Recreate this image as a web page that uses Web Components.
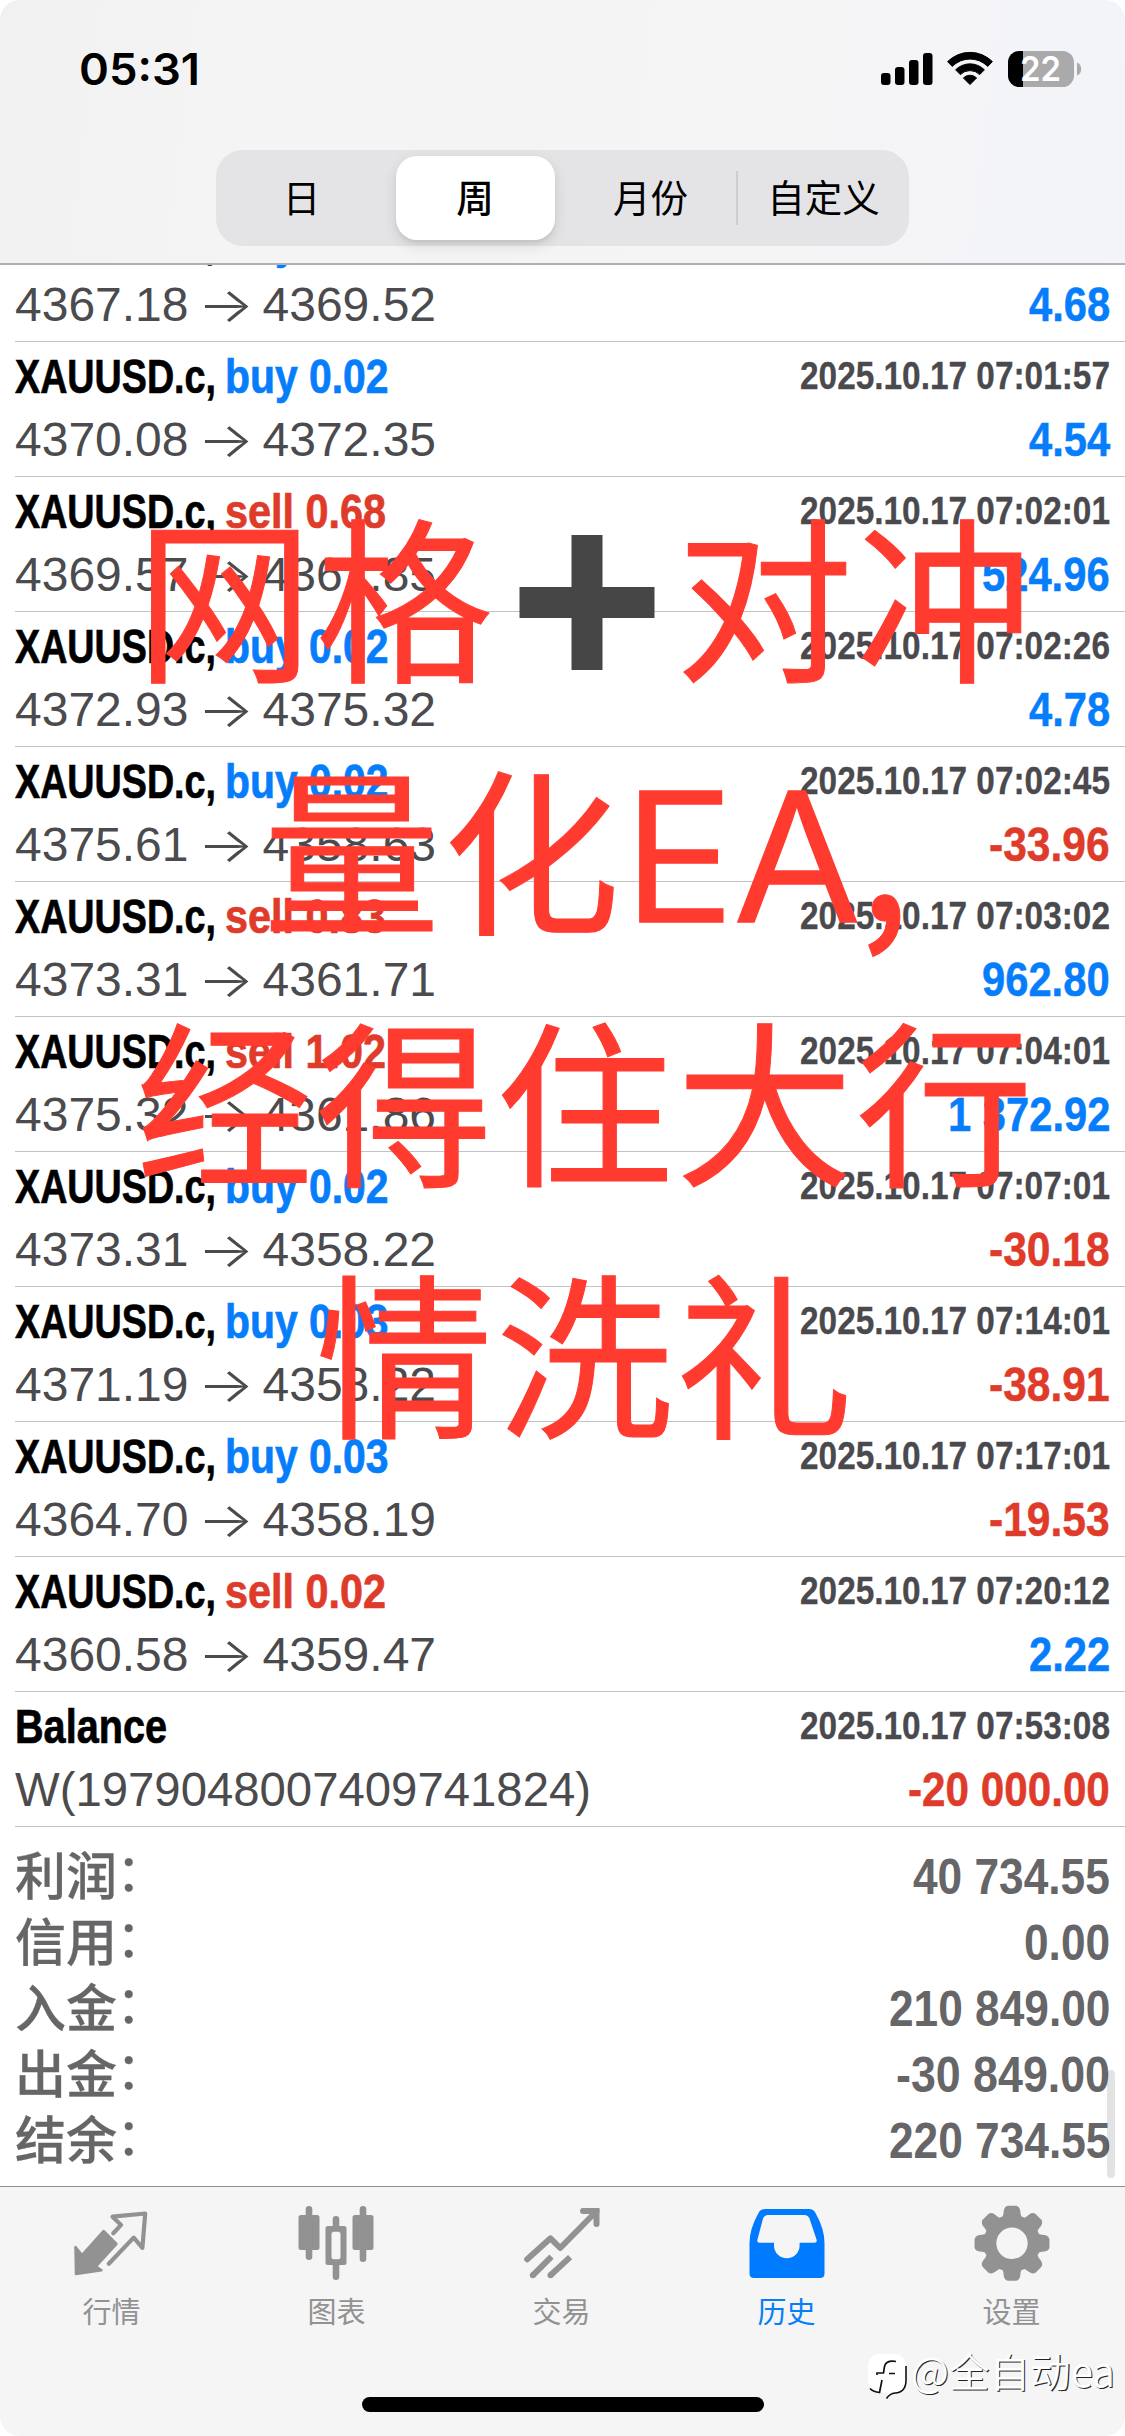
<!DOCTYPE html>
<html lang="zh-CN">
<head>
<meta charset="utf-8">
<title>历史</title>
<style>
  html, body { margin: 0; padding: 0; background: #fff; }
  body { width: 1125px; height: 2436px; overflow: hidden; font-family: "Liberation Sans", "Noto Sans CJK SC", sans-serif; }
</style>
</head>
<body>
<history-app></history-app>
<script>
const define = (name, html, setup) => {
  const tpl = document.createElement('template');
  tpl.innerHTML = html.trim();
  customElements.define(name, class extends HTMLElement {
    connectedCallback() {
      if (this.shadowRoot) return;
      const root = this.attachShadow({ mode: 'open' });
      root.appendChild(document.importNode(tpl.content, true));
      if (setup) setup(this, root);
    }
  });
};

/* Condensed text: squeezed horizontally to the advance width given in "w". */
define('fit-text', `
  <style>
    :host { display: inline-block; white-space: pre; text-align: left; }
    span { display: inline-block; transform-origin: 0 50%; }
  </style><span><slot></slot></span>`, (el, root) => {
  const s = root.querySelector('span');
  const w = +el.getAttribute('w');
  const nat = s.getBoundingClientRect().width;
  el.style.width = w + 'px';
  s.style.transform = 'scaleX(' + w / nat + ')';
  s.style.marginRight = (w - nat) + 'px';
});

/* Width of a tabular number whose digits are d px wide. */
const numWidth = (t, d) => [...t].reduce((a, c) => a + (c >= '0' && c <= '9' ? d : c === '-' ? d * .7 : d * .5), 0);

define('status-bar', `
  <style>
    :host { display: flex; justify-content: space-between; align-items: center; height: 138px; padding: 0 42px 0 79px; box-sizing: border-box; }
    .time { font: 600 43.5px/60px Inter, sans-serif; color: #000; }
    svg { display: block; }
    .b { font: 600 34px Inter, sans-serif; fill: #fff; }
  </style>
  <div class="time"><fit-text w="121">05:31</fit-text></div>
  <svg width="202" height="40" viewBox="882 49 202 40">
    <rect x="882" y="73" width="9.5" height="12" rx="3"/>
    <rect x="896" y="67" width="9.5" height="18" rx="3"/>
    <rect x="910" y="60" width="9.5" height="25" rx="3"/>
    <rect x="924" y="53" width="9.5" height="32" rx="3"/>
    <path d="M948.6 61.6a31.8 31.8 0 0 1 44.8 0l-4.6 4.8a25.2 25.2 0 0 0-35.6 0z" stroke="#000" stroke-width="1" stroke-linejoin="round"/>
    <path d="M956.6 69.8a20.4 20.4 0 0 1 28.8 0l-4.7 4.8a13.7 13.7 0 0 0-19.4 0z" stroke="#000" stroke-width="1" stroke-linejoin="round"/>
    <path d="M964.4 77.9a9.4 9.4 0 0 1 13.2 0L971 84.6z" stroke="#000" stroke-width="1" stroke-linejoin="round"/>
    <clipPath id="c"><rect x="1009" y="51" width="66" height="36" rx="11.5"/></clipPath>
    <g clip-path="url(#c)"><rect x="1009" y="51" width="66" height="36" fill="#aaaaad"/><rect x="1009" y="51" width="15" height="36"/></g>
    <path d="M1078 62.5q4.2 1.6 4.2 6.5t-4.2 6.5z" fill="#aaaaad"/>
    <text class="b" x="1021" y="81.3" textLength="41" lengthAdjust="spacingAndGlyphs">22</text>
  </svg>`);

define('seg-item', `
  <style>
    :host { display: flex; align-items: center; justify-content: center; box-sizing: border-box; width: 174px; height: 96px; font: 400 37.5px/56px "Noto Sans CJK SC", sans-serif; color: #000; }
    div { display: flex; align-items: center; justify-content: center; width: 159px; height: 84px; border-radius: 21px; }
    :host([selected]) div { background: #fff; box-shadow: 0 5px 14px rgba(0,0,0,.12), 0 3px 3px rgba(0,0,0,.05); font-weight: 500; }
    :host([line]) { border-left: 2px solid transparent; border-image: linear-gradient(transparent 21px, #cdcdcf 21px, #cdcdcf 75px, transparent 75px) 0 0 0 2; }
    span { position: relative; top: -2px; }
  </style><div><span><slot></slot></span></div>`);

define('segmented-control', `
  <style>
    :host { display: flex; width: 693px; height: 96px; border-radius: 27px; background: #e4e4e6; }
  </style><slot></slot>`);

define('top-bar', `
  <style>
    :host { display: flex; flex-direction: column; height: 265px; box-sizing: border-box; border-bottom: 2px solid #b0b0b2;
      background: linear-gradient(97deg, #f1f1f2 0%, #f4f4f4 22%, #f5f4f4 45%, #f5f5f6 70%, #f3f4f9 100%); flex: none; }
    .seg { display: flex; justify-content: center; padding-top: 12px; }
    seg-item:nth-child(1) { width: 171px; }
    seg-item:nth-child(2) { width: 176px; }
    seg-item:nth-child(3) { width: 173px; padding-left: 2px; }
    seg-item:nth-child(4) { width: 173px; }
  </style>
  <status-bar></status-bar>
  <div class="seg"><segmented-control>
    <seg-item>日</seg-item><seg-item selected>周</seg-item><seg-item>月份</seg-item><seg-item line>自定义</seg-item>
  </segmented-control></div>`);

define('trade-row', `
  <style>
    :host { display: block; height: 134px; margin-left: 15px; padding-right: 15px; border-bottom: 1px solid #c3c3c6; flex: none; }
    .l { display: flex; justify-content: space-between; }
    .l1 { height: 68px; line-height: 70px; }
    .l2 { height: 66px; line-height: 59px; }
    fit-text { font-family: "Liberation Sans Narrow", "Liberation Sans", sans-serif; font-weight: 700; }
    .t { font-size: 47.5px; color: #000; -webkit-text-stroke: .7px; }
    .side { margin-left: 9px; }
    .buy, .pos { color: #067dfb; }
    .sell, .neg { color: #df3b2b; }
    .date { font-size: 38.5px; color: #4a4a4e; line-height: 67px; -webkit-text-stroke: .3px; }
    .a { font-size: 47.5px; -webkit-text-stroke: .5px; }
    .p { font-size: 48px; color: #4b4b4e; display: flex; }
    .p .g { width: 74px; height: 59px; display: flex; justify-content: center; font-family: Inter, sans-serif; font-weight: 300; transform: scaleX(1.24); }
    .p fit-text { font-family: "Liberation Sans", sans-serif; font-weight: 400; }
  </style>
  <div class="l l1"></div><div class="l l2"></div>`, (el, root) => {
  const g = n => el.getAttribute(n);
  const [a, b] = root.querySelectorAll('.l');
  const side = g('side'), amt = g('amount');
  const title = side
    ? `<fit-text class="t" w="201">XAUUSD.c,</fit-text><fit-text class="t side ${side}" w="${side === 'buy' ? 163.5 : 161}">${side} ${g('lots')}</fit-text>`
    : `<fit-text class="t" w="152">Balance</fit-text>`;
  a.innerHTML = `<div>${title}</div><fit-text class="date" w="310">2025.10.17 ${g('time')}</fit-text>`;
  const left = g('from')
    ? `<span>${g('from')}</span><span class="g">→</span><span>${g('to')}</span>`
    : `<fit-text w="576">${g('note')}</fit-text>`;
  b.innerHTML = `<div class="p">${left}</div><fit-text class="a ${amt[0] === '-' ? 'neg' : 'pos'}" w="${numWidth(amt, 23.2)}">${amt}</fit-text>`;
});

define('sum-row', `
  <style>
    :host { display: flex; justify-content: space-between; height: 66px; line-height: 66px; color: #666668; padding: 0 15px; }
    .k { font: 500 51px/56px "Noto Sans CJK SC", sans-serif; -webkit-text-stroke: .3px #666668; }
    .c { position: relative; top: -4px; left: -1px; font-weight: 400; }
    fit-text { font: 700 50px/64px "Liberation Sans Narrow", "Liberation Sans", sans-serif; }
  </style>
  <span class="k"><span class="n"></span><span class="c">：</span></span>`, (el, root) => {
  root.querySelector('.n').textContent = el.getAttribute('label');
  const v = el.getAttribute('value');
  root.querySelector('.k').insertAdjacentHTML('afterend', `<fit-text w="${numWidth(v, 24.6)}">${v}</fit-text>`);
});

define('history-list', `
  <style>
    :host { display: flex; flex-direction: column; height: 1921px; overflow: hidden; background: #fff; position: relative; flex: none; }
    trade-row:first-of-type { margin-top: -58px; }
    .sum { padding-top: 18px; }
    .bar { position: absolute; right: 10px; top: 1805px; width: 8px; height: 108px; border-radius: 4px; background: rgba(0,0,0,.11); }
  </style>
  <trade-row side="buy" lots="0.02" time="07:01:45" from="4367.18" to="4369.52" amount="4.68"></trade-row>
  <trade-row side="buy" lots="0.02" time="07:01:57" from="4370.08" to="4372.35" amount="4.54"></trade-row>
  <trade-row side="sell" lots="0.68" time="07:02:01" from="4369.57" to="4361.85" amount="524.96"></trade-row>
  <trade-row side="buy" lots="0.02" time="07:02:26" from="4372.93" to="4375.32" amount="4.78"></trade-row>
  <trade-row side="buy" lots="0.02" time="07:02:45" from="4375.61" to="4358.63" amount="-33.96"></trade-row>
  <trade-row side="sell" lots="0.83" time="07:03:02" from="4373.31" to="4361.71" amount="962.80"></trade-row>
  <trade-row side="sell" lots="1.02" time="07:04:01" from="4375.32" to="4361.86" amount="1 372.92"></trade-row>
  <trade-row side="buy" lots="0.02" time="07:07:01" from="4373.31" to="4358.22" amount="-30.18"></trade-row>
  <trade-row side="buy" lots="0.03" time="07:14:01" from="4371.19" to="4358.22" amount="-38.91"></trade-row>
  <trade-row side="buy" lots="0.03" time="07:17:01" from="4364.70" to="4358.19" amount="-19.53"></trade-row>
  <trade-row side="sell" lots="0.02" time="07:20:12" from="4360.58" to="4359.47" amount="2.22"></trade-row>
  <trade-row time="07:53:08" note="W(1979048007409741824)" amount="-20 000.00"></trade-row>
  <div class="sum">
    <sum-row label="利润" value="40 734.55"></sum-row>
    <sum-row label="信用" value="0.00"></sum-row>
    <sum-row label="入金" value="210 849.00"></sum-row>
    <sum-row label="出金" value="-30 849.00"></sum-row>
    <sum-row label="结余" value="220 734.55"></sum-row>
  </div>
  <div class="bar"></div>`);

define('tab-item', `
  <style>
    :host { display: flex; flex-direction: column; align-items: center; width: 225px; color: #929292; font: 400 29px/44px "Noto Sans CJK SC", sans-serif; padding-top: 13px; box-sizing: border-box; }
    :host([active]) { color: #067dfb; }
    ::slotted(svg) { display: block; width: 100px; height: 84px; margin-bottom: 4px; }
    span { position: relative; left: -1px; }
  </style><slot name="icon"></slot><span><slot></slot></span>`);

define('tab-bar', `
  <style>
    :host { display: block; height: 250px; box-sizing: border-box; border-top: 1px solid #8e8e90; background: #f5f5f6; flex: none; }
    nav { display: flex; height: 210px; }
    .home { width: 402px; height: 15px; border-radius: 7.5px; background: #000; margin: 0 auto; }
  </style>
  <nav>
    <tab-item><svg slot="icon" viewBox="63.5 2200 100 84">
      <path d="M113.8 2233.2l7.8-8.3-8.6-8.2 32.7-3.2-2.8 34.3-8.7-10.2-24.9 26.1" fill="none" stroke="#929292" stroke-width="4.2" stroke-linecap="round" stroke-linejoin="round"/>
      <path d="M76 2247l6.5 8 21.5-24 13 13-20.5 22.5 5.5 3.8-25.5 3.7z" fill="#929292" stroke="#929292" stroke-width="2.5" stroke-linejoin="round"/>
    </svg>行情</tab-item>
    <tab-item><svg slot="icon" viewBox="288.5 2200 100 84" fill="#929292">
      <rect x="299" y="2215" width="21" height="35" rx="2.5"/><rect x="306.2" y="2206" width="6.6" height="54" rx="3.3"/>
      <path fill-rule="evenodd" d="M328.5 2226h16a2.5 2.5 0 0 1 2.5 2.5v34a2.5 2.5 0 0 1-2.5 2.5h-16a2.5 2.5 0 0 1-2.5-2.5v-34a2.5 2.5 0 0 1 2.5-2.5zM334.5 2231.7a2.5 2.5 0 0 0-2.5 2.5v22.5a2.5 2.5 0 0 0 2.5 2.5h4a2.5 2.5 0 0 0 2.5-2.5v-22.5a2.5 2.5 0 0 0-2.5-2.5z"/>
      <path d="M333.2 2227v-7.7a3.3 3.3 0 0 1 6.6 0v7.7zM333.2 2264h6.6v12.7a3.3 3.3 0 0 1-6.6 0z"/>
      <rect x="353" y="2215" width="21" height="35" rx="2.5"/><rect x="360.2" y="2206" width="6.6" height="56" rx="3.3"/>
    </svg>图表</tab-item>
    <tab-item><svg slot="icon" viewBox="512.5 2200 100 84" fill="none" stroke="#929292" stroke-width="6">
      <path stroke-linecap="round" stroke-linejoin="round" d="M526.7 2259.3l23.3-21 9.7 9.7 36-36.5M582.5 2211h13.5v13"/>
      <path d="M594 2208h5v5z" fill="#929292" stroke="none"/>
      <circle cx="532.3" cy="2275.3" r="3" fill="#929292" stroke="none"/><circle cx="550" cy="2275.3" r="3" fill="#929292" stroke="none"/>
      <path d="M532.3 2275.3l18.7-18.7M550 2275.3l19.6-18.2"/>
    </svg>交易</tab-item>
    <tab-item active><svg slot="icon" viewBox="737.5 2200 100 84">
      <path fill="#007aff" fill-rule="evenodd" d="M764.5 2209h44q4.5 0 6.5 4 9 16 9 30v30.5q0 4.5-4.5 4.5h-66q-4.5 0-4.5-4.5v-30.5q0-14 9-30 2-4 6.5-4zM767.5 2215q-3.5 0-5 3.5l-5.5 21q-1 3.2 2 3.2h14.5v2.8a12.8 12.8 0 0 0 25.6 0v-2.8h14.9q3 0 2-3.2l-7-21q-1.5-3.5-5-3.5z"/>
    </svg>历史</tab-item>
    <tab-item><svg slot="icon" viewBox="962.5 2200 100 84"><path id="gear" fill="#929292" fill-rule="evenodd"/></svg>设置</tab-item>
  </nav>
  <div class="home"></div>`, (el, root) => {
  /* Eight rounded teeth around a ring. */
  const cx = 1011.5, cy = 2243.3, pt = (r, a) => (cx + r * Math.cos(a)).toFixed(2) + ' ' + (cy + r * Math.sin(a)).toFixed(2);
  let d = '';
  for (let i = 0; i < 8; i++) {
    const a = i * Math.PI / 4;
    d += (i ? 'L' : 'M') + pt(28.5, a - .33) + 'Q' + pt(31, a - .27) + ' ' + pt(33.5, a - .25)
      + 'Q' + pt(37.5, a - .2) + ' ' + pt(37.7, a - .11) + 'L' + pt(37.7, a + .11)
      + 'Q' + pt(37.5, a + .2) + ' ' + pt(33.5, a + .25) + 'Q' + pt(31, a + .27) + ' ' + pt(28.5, a + .33);
  }
  d += 'Z M' + (cx - 15.7) + ' ' + cy + 'a15.7 15.7 0 1 0 31.4 0a15.7 15.7 0 1 0-31.4 0z';
  root.getElementById('gear').setAttribute('d', d);
});

/* Large caption laid over the list. */
define('caption-overlay', `
  <style>
    :host { position: absolute; left: 86px; top: 466px; width: 1000px; text-align: center; font: 400 177px/252px "Noto Sans CJK SC", sans-serif; letter-spacing: 3px; color: #ff3b30; -webkit-text-stroke: 1px #ff3b30; white-space: nowrap; }
    .row { height: 252px; display: flex; justify-content: center; }
    .mix { align-items: baseline; }
    svg { display: block; width: 180px; height: 252px; }
    .en { font-family: Inter, sans-serif; font-weight: 300; letter-spacing: 0; -webkit-text-stroke: 3.5px #ff3b30; }
    .comma { letter-spacing: 0; font-weight: 500; }
  </style>
  <div class="row"><span>网格</span><svg viewBox="496 466 180 252" role="img" aria-label="➕"><path d="M571.5 535h31v52h52v31h-52v52h-31v-52h-52v-31h52z" fill="#464646"/></svg><span>对冲</span></div>
  <div class="row mix"><span>量化</span><fit-text class="en" w="237">EA</fit-text><fit-text class="comma" w="49">,</fit-text></div>
  <div class="row">经得住大行</div>
  <div class="row">情洗礼</div>`);

define('water-mark', `
  <style>
    :host { position: absolute; left: 867px; top: 2348px; display: flex; align-items: flex-start; height: 54px; color: #fff; font: 350 40px/44px "Noto Sans CJK SC", sans-serif; text-shadow: 1px 1px 0 #222; white-space: nowrap; }
    svg { display: block; margin-right: 3px; }
  </style>
  <svg width="41" height="54" viewBox="867 2348 41 54">
    <path d="M880 2354h14q12 0 12 14v12q0 13-11 13l-8 5.5 1.5-5.5-8.5-1q-12 0-12-14v-10q0-14 12-14z" fill="#fff"/>
    <path d="M906 2366v14q0 12.5-11 13-5 .5-8.5 5.5" fill="none" stroke="#111" stroke-width="1.6"/>
    <path d="M896 2361.5q-10-1.5-11.5 5l-1 6.5h-6.5v2M889 2373.5h6M882 2380l-2.5 12.5q-6-.5-9.5-4" fill="none" stroke="#111" stroke-width="1.7"/>
  </svg><fit-text w="204">@全自动ea</fit-text>`);

define('history-app', `
  <style>
    :host { display: flex; flex-direction: column; position: relative; width: 1125px; height: 2436px; border-radius: 20px; overflow: hidden; background: #fff; }
  </style>
  <top-bar></top-bar><history-list></history-list><tab-bar></tab-bar>
  <caption-overlay></caption-overlay><water-mark></water-mark>`);
</script>
</body>
</html>
